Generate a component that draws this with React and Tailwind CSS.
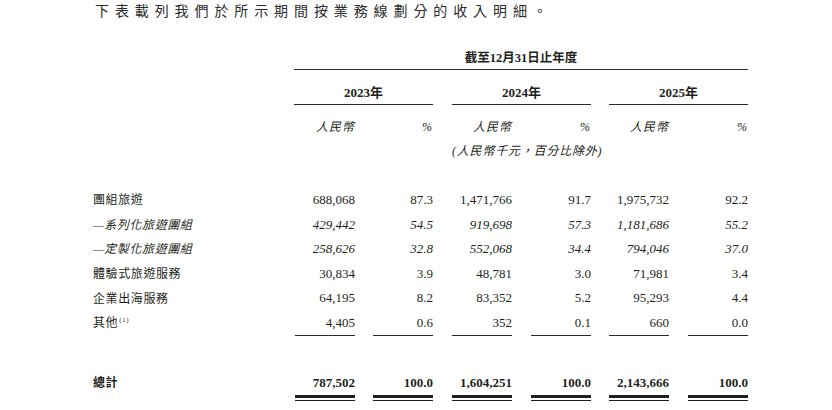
const font = { fontFamily: '"Liberation Serif", "Noto Sans CJK TC", serif' };

const rows = [
  { label: '團組旅遊', values: ['688,068', '87.3', '1,471,766', '91.7', '1,975,732', '92.2'] },
  { label: '—系列化旅遊團組', values: ['429,442', '54.5', '919,698', '57.3', '1,181,686', '55.2'], sub: true },
  { label: '—定製化旅遊團組', values: ['258,626', '32.8', '552,068', '34.4', '794,046', '37.0'], sub: true },
  { label: '體驗式旅遊服務', values: ['30,834', '3.9', '48,781', '3.0', '71,981', '3.4'] },
  { label: '企業出海服務', values: ['64,195', '8.2', '83,352', '5.2', '95,293', '4.4'] },
  { label: '其他', note: '(1)', values: ['4,405', '0.6', '352', '0.1', '660', '0.0'], last: true },
];

const totals = ['787,502', '100.0', '1,604,251', '100.0', '2,143,666', '100.0'];

const grid = 'grid grid-cols-[201px_61px_78px_79px_79px_78px_79px]';

function Row({ row }) {
  return (
    <div className={`${grid} h-[24.6px] items-center`}>
      <div className={`text-[12px] tracking-[0.6px] ${row.sub ? 'italic' : ''}`}>
        {row.label}
        {row.note && <sup className="text-[7px] ml-[1px] -top-[5px]">{row.note}</sup>}
      </div>
      {row.values.map((v, i) => (
        <div key={i} className="flex justify-end h-full">
          <div
            className={`w-[60px] text-right text-[13px] leading-[24px] ${row.sub ? 'italic' : ''} ${
              row.last ? 'border-b border-[#2b2b2b]' : ''
            }`}
          >
            {v}
          </div>
        </div>
      ))}
    </div>
  );
}

export default function App() {
  return (
    <div className="w-[832px] h-[410px] bg-white text-[#231f20] overflow-hidden" style={font}>
      <div className="pl-[95px] h-[24px] leading-[24px] text-[14px] tracking-[5.9px] text-[#2a2a2a]">
        下表載列我們於所示期間按業務線劃分的收入明細。
      </div>

      <div className="pl-[93px] mt-[24px]">
        {/* period heading */}
        <div className={grid}>
          <div />
          <div className="col-span-6 h-[22px] border-b border-[#2b2b2b] text-center font-bold text-[12.5px] leading-[20px]">
            截至12月31日止年度
          </div>
        </div>

        {/* years */}
        <div className={grid}>
          <div />
          <div className="col-span-2 h-[35px] flex items-end justify-center border-b border-[#2b2b2b] font-bold text-[13px] leading-[20px] pb-[1px]">
            2023年
          </div>
          <div className="col-span-2 h-[35px] pl-[19px]">
            <div className="h-full flex items-end justify-center border-b border-[#2b2b2b] font-bold text-[13px] leading-[20px] pb-[1px]">
              2024年
            </div>
          </div>
          <div className="col-span-2 h-[35px] pl-[18px]">
            <div className="h-full flex items-end justify-center border-b border-[#2b2b2b] font-bold text-[13px] leading-[20px] pb-[1px]">
              2025年
            </div>
          </div>
        </div>

        {/* currency heading */}
        <div className={`${grid} pt-[12px] leading-[20px] text-[12px] italic`}>
          <div />
          {['人民幣', '%', '人民幣', '%', '人民幣', '%'].map((t, i) => (
            <div key={i} className="text-right tracking-[1px]">
              {t}
            </div>
          ))}
        </div>
        <div className={`${grid} pt-[4px] leading-[20px] text-[12px] italic`}>
          <div />
          <div className="col-span-2" />
          <div className="col-span-2 pl-[19px] text-center tracking-[0.8px] whitespace-nowrap">
            (人民幣千元，百分比除外)
          </div>
        </div>

        <div className="mt-[27px]">
          {rows.map((r) => (
            <Row key={r.label} row={r} />
          ))}
        </div>

        {/* total */}
        <div className={`${grid} mt-[36px]`}>
          <div className="text-[12px] font-bold tracking-[0.6px] leading-[22px]">總計</div>
          {totals.map((v, i) => (
            <div key={i} className="flex justify-end">
              <div className="w-[60px] text-right text-[13px] font-bold leading-[22px]">
                {v}
                <div className="mt-[1px] h-[3px] bg-[#231f20]" />
                <div className="mt-[2px] h-[1px] bg-[#231f20]" />
              </div>
            </div>
          ))}
        </div>
      </div>
    </div>
  );
}
